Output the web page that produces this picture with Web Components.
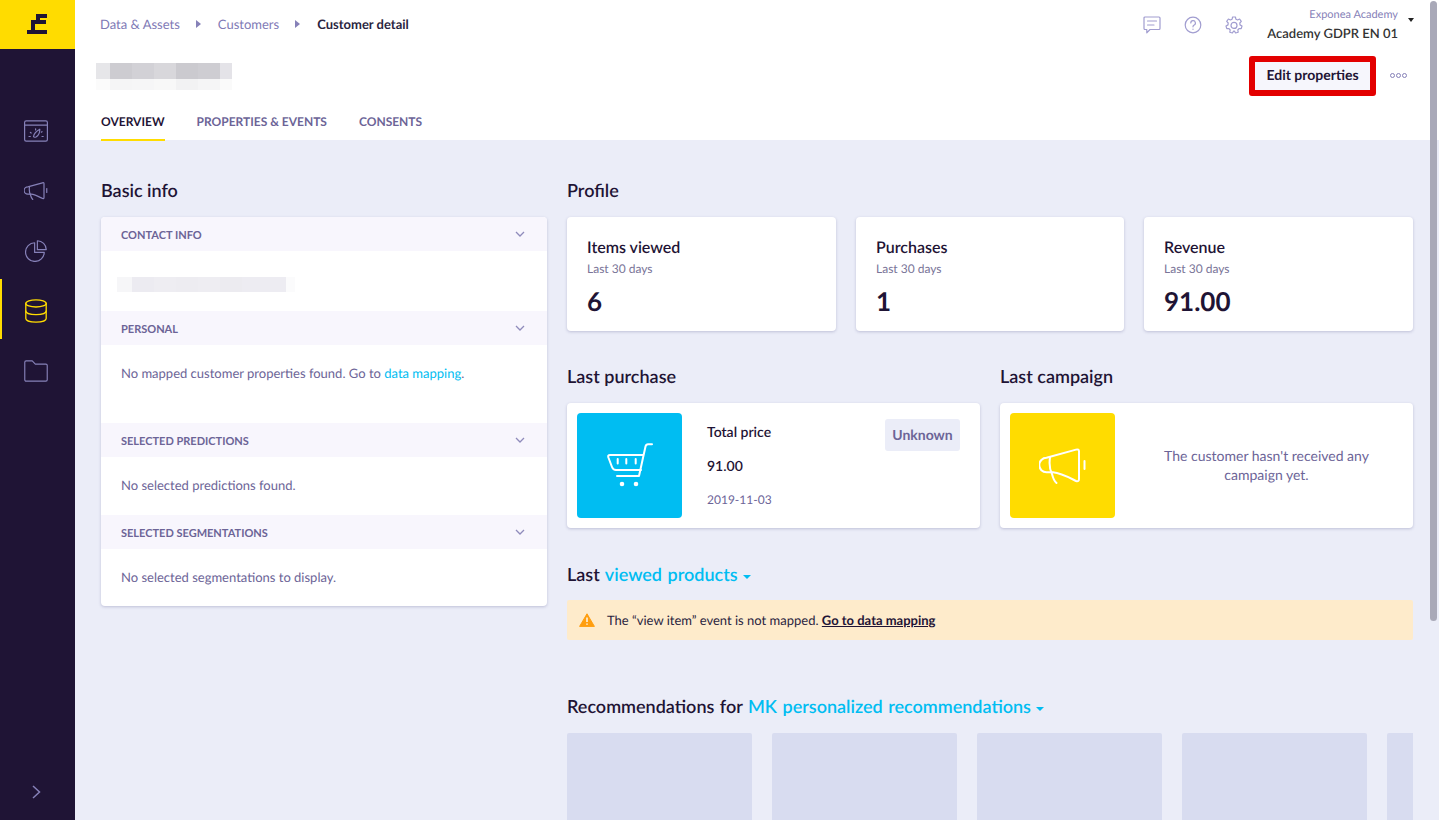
<!DOCTYPE html>
<html lang="en">
<head>
<meta charset="UTF-8" />
<title>Customer detail</title>
<style>
  * { box-sizing: border-box; }
  html, body { margin: 0; height: 100%; overflow: hidden; }
  body { font-family: Lato, "Liberation Sans", sans-serif; color: #1f1435; background: #ebedf8; text-rendering: geometricPrecision; }
  #app { display: flex; width: 1439px; height: 820px; overflow: hidden; }
  #page { flex: 1; min-width: 0; display: flex; flex-direction: column; }
</style>
</head>
<body>
<div id="app">
  <side-bar></side-bar>
  <div id="page">
    <top-header></top-header>
    <main-view>
      <div slot="left">
        <sec-title>Basic info</sec-title>
        <info-panel>
          <info-section label="CONTACT INFO" h="60">
            <blur-strip cells="15:#f6f6f8,22:#ecebf1,22:#eeedf2,22:#edecf1,22:#eeedf2,22:#ecebf0,22:#edecf2,22:#edecf2,9:#fbfbfc" height="15"></blur-strip>
          </info-section>
          <info-section label="PERSONAL" h="78">No mapped customer properties found. Go to <a>data mapping</a>.</info-section>
          <info-section label="SELECTED PREDICTIONS" h="58">No selected predictions found.</info-section>
          <info-section label="SELECTED SEGMENTATIONS" h="57">No selected segmentations to display.</info-section>
        </info-panel>
      </div>
      <div slot="right">
        <sec-title>Profile</sec-title>
        <stat-row>
          <stat-card name="Items viewed" value="6"></stat-card>
          <stat-card name="Purchases" value="1"></stat-card>
          <stat-card name="Revenue" value="91.00"></stat-card>
        </stat-row>
        <last-row></last-row>
        <viewed-block></viewed-block>
        <reco-block></reco-block>
      </div>
    </main-view>
  </div>
</div>
<over-scroll></over-scroll>

<script>
  function define(tag, html) {
    customElements.define(tag, class extends HTMLElement {
      connectedCallback() {
        if (this.shadowRoot) return;
        const root = this.attachShadow({ mode: "open" });
        const body = typeof html === "function" ? html(this) : html;
        root.innerHTML = "<style>*{box-sizing:border-box}</style>" + body;
      }
    });
  }

  const ICON = 'fill="none" stroke="currentColor" stroke-linecap="round" stroke-linejoin="round"';

  const megaphone = (w, h, sw) => `<svg width="${w}" height="${h}" viewBox="0 0 48 36" ${ICON} stroke-width="${sw}">
    <path d="M7.5 9.8 L37 1.6 Q40 0.8 40 3.5 V31 Q40 34 37 33 C30 29.5 22 25 14 24.3 H7.5 A7.25 7.25 0 0 1 7.5 9.8 Z"/>
    <path d="M11 9.5 C10 16 11 22 13 26 C14 30 15 33 17.5 35"/>
    <path d="M45.5 13 V21"/>
  </svg>`;

  define("side-bar", `
    <style>
      :host { display: flex; flex-direction: column; width: 75px; height: 820px; background: #1f1435; flex: none; color: #8681b8; }
      .logo { height: 49px; background: #ffdc00; display: flex; align-items: center; justify-content: center; margin-bottom: 52px; }
      .logo svg { display: block; }
      .item { height: 60px; display: flex; align-items: center; justify-content: center; position: relative; padding-right: 3px; }
      .item svg { display: block; }
      .item.on { color: #ffdc00; }
      .item.on::before { content: ""; position: absolute; left: 0; top: -2px; width: 2px; height: 60px; background: #ffdc00; }
      .grow { flex: 1; }
      .toggle { height: 56px; display: flex; align-items: center; justify-content: center; padding-right: 3px; }
    </style>
    <div class="logo">
      <svg width="20" height="20" viewBox="0 0 20 20" fill="#1f1435" style="margin-left:-1px;margin-top:-1px">
        <path d="M9 0 H20 V4 H13 V6 H19 V10 H8 V16 H20 V20 H0 V16 H4 V6 H9 Z"/>
      </svg>
    </div>
    <div class="item">
      <svg width="24" height="22" viewBox="0 0 24 22" ${ICON} stroke-width="1.2">
        <rect x="0.6" y="0.8" width="22.8" height="20.4" rx="1.6"/>
        <path d="M0.6 5.2 H23.4"/>
        <path d="M9.5 16.5 C10 13.5 13 10.8 15.8 9.2 C15.8 12.5 14.5 15.6 12 17 C10.8 17.4 9.8 17.2 9.5 16.5 Z"/>
        <path d="M5 16.5 H6.3 M6.4 12.4 L7.2 13 M11.6 8.8 V10 M18 16.5 H19.2 M17.3 12.2 L18 11.7"/>
      </svg>
    </div>
    <div class="item">${megaphone(24, 18, 2.4)}</div>
    <div class="item">
      <svg width="22" height="22" viewBox="0 0 24 24" ${ICON} stroke-width="1.3">
        <path d="M10.5 3 A10.2 10.2 0 1 0 21 13.5 H10.5 Z"/>
        <path d="M13.5 0.8 A9.8 9.8 0 0 1 23.2 10.5 H13.5 Z"/>
      </svg>
    </div>
    <div class="item on">
      <svg width="22" height="24" viewBox="0 0 22 24" ${ICON} stroke-width="1.3">
        <ellipse cx="11" cy="4.4" rx="10.2" ry="3.6"/>
        <path d="M0.8 4.4 V19.6 C0.8 21.6 5 23.2 11 23.2 C17 23.2 21.2 21.6 21.2 19.6 V4.4"/>
        <path d="M0.8 12 C0.8 14 5 15.6 11 15.6 C17 15.6 21.2 14 21.2 12"/>
      </svg>
    </div>
    <div class="item">
      <svg width="24" height="22" viewBox="0 0 25 22" ${ICON} stroke-width="1.2" preserveAspectRatio="none">
        <path d="M0.8 2.2 A1.4 1.4 0 0 1 2.2 0.8 H8.6 L11.8 4.2 H22.8 A1.4 1.4 0 0 1 24.2 5.6 V19.8 A1.4 1.4 0 0 1 22.8 21.2 H2.2 A1.4 1.4 0 0 1 0.8 19.8 Z"/>
      </svg>
    </div>
    <div class="grow"></div>
    <div class="toggle">
      <svg width="9" height="14" viewBox="0 0 9 14" fill="none" stroke="#8681b8" stroke-width="1.5"><path d="M1 1 L7.5 7 L1 13"/></svg>
    </div>
  `);

  define("top-header", `
    <style>
      :host { display: block; height: 140px; background: #fff; flex: none; position: relative; padding: 0 26px; }
      .top { height: 49px; display: flex; align-items: center; justify-content: space-between; margin: 0 -1px 0 -1px; }
      .crumbs { display: flex; align-items: center; font-size: 13px; color: #7f7ab6; margin-top: -2px; }
      .crumbs b { font-weight: 700; color: #2a2440; }
      .sep { width: 0; height: 0; border-left: 5px solid #8681b8; border-top: 4px solid transparent; border-bottom: 4px solid transparent; margin: 0 17px 0 16px; }
      .tools { display: flex; align-items: center; color: #a19dd0; }
      .tools svg { display: block; }
      .account { margin-left: 24px; text-align: right; }
      .account small { display: block; font-size: 11px; line-height: 14px; color: #8681b8; padding-top: 1px; }
      .account span { display: block; font-size: 13px; font-weight: 600; line-height: 18px; color: #333; margin-top: 2px; }
      .caret { width: 0; height: 0; border-top: 4px solid #222; border-left: 3.5px solid transparent; border-right: 3.5px solid transparent; margin: -9px 0 0 10px; }
      .mid { height: 52px; display: flex; align-items: flex-start; justify-content: space-between; margin-left: -5px; }
      .edit { margin-top: 7px; width: 127px; height: 40px; padding-bottom: 3px; border: 6px solid #e30000; border-radius: 3px; background: #f6f6fc; display: flex; align-items: center; justify-content: center; font-size: 14px; font-weight: 700; color: #1f1435; }
      .right { display: flex; align-items: flex-start; }
      .dots { display: flex; gap: 1px; margin: 24px 6px 0 14px; width: 17px; }
      .dots i { width: 5px; height: 5px; border: 1px solid #8681b8; border-radius: 50%; }
      .tabs { display: flex; gap: 32px; }
      .tab { font-size: 12px; font-weight: 700; color: #6c6497; height: 40px; padding-top: 13px; line-height: 15px; }
      .tab.on { color: #1f1435; border-bottom: 2px solid #ffdc00; }
    </style>
    <div class="top">
      <div class="crumbs">Data &amp; Assets<i class="sep"></i>Customers<i class="sep"></i><b>Customer detail</b></div>
      <div class="tools">
        <svg width="18" height="18" viewBox="0 0 18 18" ${ICON} stroke-width="1.2" style="margin-right:23px"><path d="M2 1 H16 A1 1 0 0 1 17 2 V12.5 A1 1 0 0 1 16 13.5 H7 L3.8 16.8 V13.5 H2 A1 1 0 0 1 1 12.5 V2 A1 1 0 0 1 2 1 Z"/><path d="M4.5 5 H13.5 M4.5 9 H11"/></svg>
        <svg width="18" height="18" viewBox="0 0 18 18" ${ICON} stroke-width="1.2" style="margin-right:23px"><circle cx="9" cy="9" r="7.8"/><path d="M6.8 7 A2.3 2.3 0 1 1 9.8 9.2 C9.2 9.5 9 10 9 10.8"/><path d="M9 13.2 V13.3"/></svg>
        <svg width="18" height="18" viewBox="0 0 18 18" ${ICON} stroke-width="1.2"><path d="M7.6 1 H10.4 L10.9 3.2 L12.6 4 L14.6 3 L16.3 5.3 L14.8 7 L15 8.9 L17 10 L16.2 12.6 L14 12.6 L12.8 14 L13.2 16.2 L10.6 17 L9.4 15.2 H8.6 L7.4 17 L4.8 16.2 L5.2 14 L4 12.6 L1.8 12.6 L1 10 L3 8.9 L3.2 7 L1.7 5.3 L3.4 3 L5.4 4 L7.1 3.2 Z"/><circle cx="9" cy="9.4" r="3"/></svg>
        <div class="account"><small>Exponea Academy</small><span>Academy GDPR EN 01</span></div>
        <i class="caret"></i>
      </div>
    </div>
    <div class="mid">
      <blur-strip cells="14:#e6e6e9,22:#cdccd1,22:#d2d1d6,22:#d8d7db,22:#cbcacf,22:#cecdd2,12:#e4e3e8" height="16" cells2="14:#fbfbfb,22:#f5f5f6,22:#f6f6f7,22:#f8f8f8,22:#f2f2f3,22:#f5f5f6,12:#fafafa" height2="11" style="margin-top:14px"></blur-strip>
      <div class="right">
        <div class="edit">Edit properties</div>
        <div class="dots"><i></i><i></i><i></i></div>
      </div>
    </div>
    <div class="tabs">
      <div class="tab on">OVERVIEW</div>
      <div class="tab">PROPERTIES &amp; EVENTS</div>
      <div class="tab">CONSENTS</div>
    </div>
  `);

  // pixelated rows standing in for the redacted name and e-mail
  define("blur-strip", el => {
    const row = (cells, h) => `<div class="r" style="height:${h}px">` + cells.split(",").map(c => {
      const [w, col] = c.split(":");
      return `<i style="width:${w}px;background:${col}"></i>`;
    }).join("") + "</div>";
    return `<style>
      :host { display: block; width: max-content; }
      .r { display: flex; }
      i { display: block; height: 100%; }
    </style>` + row(el.getAttribute("cells"), el.getAttribute("height")) +
      (el.getAttribute("cells2") ? row(el.getAttribute("cells2"), el.getAttribute("height2")) : "");
  });

  define("main-view", `
    <style>
      :host { display: grid; grid-template-columns: 446px 846px; gap: 20px; padding: 37px 26px 0; flex: 1; min-height: 0; }
      ::slotted(div) { min-width: 0; }
    </style>
    <slot name="left"></slot><slot name="right"></slot>
  `);

  define("sec-title", `
    <style>
      :host { display: block; font-size: 18px; font-weight: 600; line-height: 26px; height: 40px; color: #1f1435; }
    </style>
    <slot></slot>
  `);

  define("info-panel", `
    <style>
      :host { display: block; background: #fff; border-radius: 4px; overflow: hidden; box-shadow: 0 1px 3px rgba(60,60,120,.25); }
    </style>
    <slot></slot>
  `);

  define("info-section", el => `
    <style>
      :host { display: block; }
      .head { height: 34px; padding: 2px 22px 0 20px; background: #f8f6fd; display: flex; align-items: center; justify-content: space-between; font-size: 11px; font-weight: 700; color: #6c6497; }
      .head svg { margin-top: -2px; }
      .body { height: ${el.getAttribute("h")}px; padding: 0 20px 2px; font-size: 13px; color: #6c6497; display: flex; align-items: center; }
      .body.top { padding-top: 20px; align-items: flex-start; }
      .body.blur { padding: 26px 0 0 16px; align-items: flex-start; }
      ::slotted(a) { color: #00bdf2; }
      .txt { display: block; }
    </style>
    <div class="head">${el.getAttribute("label")}
      <svg width="10" height="6" viewBox="0 0 10 6" fill="none" stroke="#8f8bbb" stroke-width="1.3"><path d="M1 1 L5 5 L9 1"/></svg>
    </div>
    <div class="body ${el.querySelector("blur-strip") ? "blur" : (el.getAttribute("h") === "78" ? "top" : "")}"><span class="txt"><slot></slot></span></div>
  `);

  define("stat-row", `
    <style>:host { display: grid; grid-template-columns: 269px 268px 269px; gap: 20px; }</style>
    <slot></slot>
  `);

  define("stat-card", el => `
    <style>
      :host { display: block; height: 114px; background: #fff; border-radius: 4px; padding: 21px 20px 0; box-shadow: 0 1px 3px rgba(60,60,120,.25); }
      .n { font-size: 16px; font-weight: 600; line-height: 20px; color: #1f1435; }
      .s { font-size: 12px; line-height: 16px; color: #7a7598; margin-top: 3px; }
      .v { font-size: 26px; font-weight: 700; line-height: 34px; color: #1f1435; margin-top: 7px; }
    </style>
    <div class="n">${el.getAttribute("name")}</div>
    <div class="s">Last 30 days</div>
    <div class="v">${el.getAttribute("value")}</div>
  `);

  define("last-row", `
    <style>
      :host { display: grid; grid-template-columns: 413px 413px; gap: 20px; margin-top: 32px; }
      .card { height: 125px; background: #fff; border-radius: 4px; padding: 10px; display: flex; position: relative; box-shadow: 0 1px 3px rgba(60,60,120,.25); }
      .tile { width: 105px; height: 105px; border-radius: 4px; display: flex; align-items: center; justify-content: center; color: #fff; flex: none; }
      .tile svg { display: block; }
      .blue { background: #00bdf2; }
      .yellow { background: #ffdc00; }
      .info { padding: 10px 0 0 25px; }
      .lab { font-size: 14px; font-weight: 600; line-height: 18px; color: #1f1435; }
      .val { font-size: 14px; font-weight: 600; line-height: 18px; margin-top: 16px; color: #1f1435; }
      .date { font-size: 12px; line-height: 16px; margin-top: 17px; color: #6c6497; }
      .badge { position: absolute; left: 318px; top: 16px; width: 75px; height: 32px; padding-bottom: 1px; background: #ebedf8; border-radius: 3px; display: flex; align-items: center; justify-content: center; font-size: 14px; font-weight: 700; color: #6c6497; }
      .msg { flex: 1; display: flex; align-items: center; justify-content: center; text-align: center; font-size: 14px; line-height: 19px; color: #6c6497; padding: 0 15px 2px 30px; }
    </style>
    <div>
      <sec-title>Last purchase</sec-title>
      <div class="card">
        <div class="tile blue">
          <svg width="46" height="46" viewBox="0 0 46 46" ${ICON} stroke-width="2">
            <path d="M45 1.2 H41 Q39 1.2 38.5 3.5 L32 33 H10"/>
            <path d="M36 12 H3 Q0.6 12 1.4 14.5 L5 24 Q6 27 9 27 H34"/>
            <path d="M10.7 16 V20.5 M19.3 16 V20.5 M28.7 16 V20.5"/>
            <circle cx="15" cy="41" r="1.3" fill="currentColor"/><circle cx="29" cy="41" r="1.3" fill="currentColor"/>
          </svg>
        </div>
        <div class="info">
          <div class="lab">Total price</div>
          <div class="val">91.00</div>
          <div class="date">2019-11-03</div>
        </div>
        <div class="badge">Unknown</div>
      </div>
    </div>
    <div>
      <sec-title>Last campaign</sec-title>
      <div class="card">
        <div class="tile yellow">${megaphone(48, 36, 2)}</div>
        <div class="msg">The customer hasn't received any campaign yet.</div>
      </div>
    </div>
  `);

  define("viewed-block", `
    <style>
      :host { display: block; margin-top: 32px; }
      sec-title { line-height: 28px; word-spacing: 1px; }
      .alert { height: 40px; background: #feebcb; border-radius: 2px; display: flex; align-items: center; padding-left: 12px; font-size: 13px; color: #2a2440; white-space: pre; }
      .alert svg { margin-right: 12px; display: block; }
      .alert b { font-weight: 700; text-decoration: underline; color: #1f1435; }
      a { color: #00bdf2; }
      .car { display: inline-block; width: 0; height: 0; border-top: 4px solid #00bdf2; border-left: 4px solid transparent; border-right: 4px solid transparent; vertical-align: 2px; margin-left: 5px; }
    </style>
    <sec-title>Last <a>viewed products</a><i class="car"></i></sec-title>
    <div class="alert">
      <svg width="16" height="14" viewBox="0 0 16 14"><path d="M8 0.8 L15.4 13.4 H0.6 Z" fill="#ff9e0f" stroke="#ff9e0f" stroke-linejoin="round"/><path d="M8 4.6 V9 M8 10.6 V11.8" stroke="#fff" stroke-width="1.4"/></svg>The “view item” event is not mapped. <b>Go to data mapping</b>
    </div>
  `);

  define("reco-block", `
    <style>
      :host { display: block; margin-top: 52px; height: 130px; overflow: hidden; }
      a { color: #00bdf2; }
      .car { display: inline-block; width: 0; height: 0; border-top: 4px solid #00bdf2; border-left: 4px solid transparent; border-right: 4px solid transparent; vertical-align: 2px; margin-left: 5px; }
      sec-title { height: 41px; line-height: 28px; word-spacing: 1px; }
      .tiles { display: flex; gap: 20px; overflow: hidden; }
      .tiles i { flex: none; width: 185px; height: 120px; background: #d8dcf0; border-radius: 2px; }
    </style>
    <sec-title>Recommendations for <a>MK personalized recommendations</a><i class="car"></i></sec-title>
    <div class="tiles"><i></i><i></i><i></i><i></i><i></i></div>
  `);

  define("over-scroll", `
    <style>
      :host { position: fixed; left: 1430px; top: 1px; width: 7px; height: 620px; background: #a9a9b8; border-radius: 4px; }
    </style>
  `);
</script>
</body>
</html>
